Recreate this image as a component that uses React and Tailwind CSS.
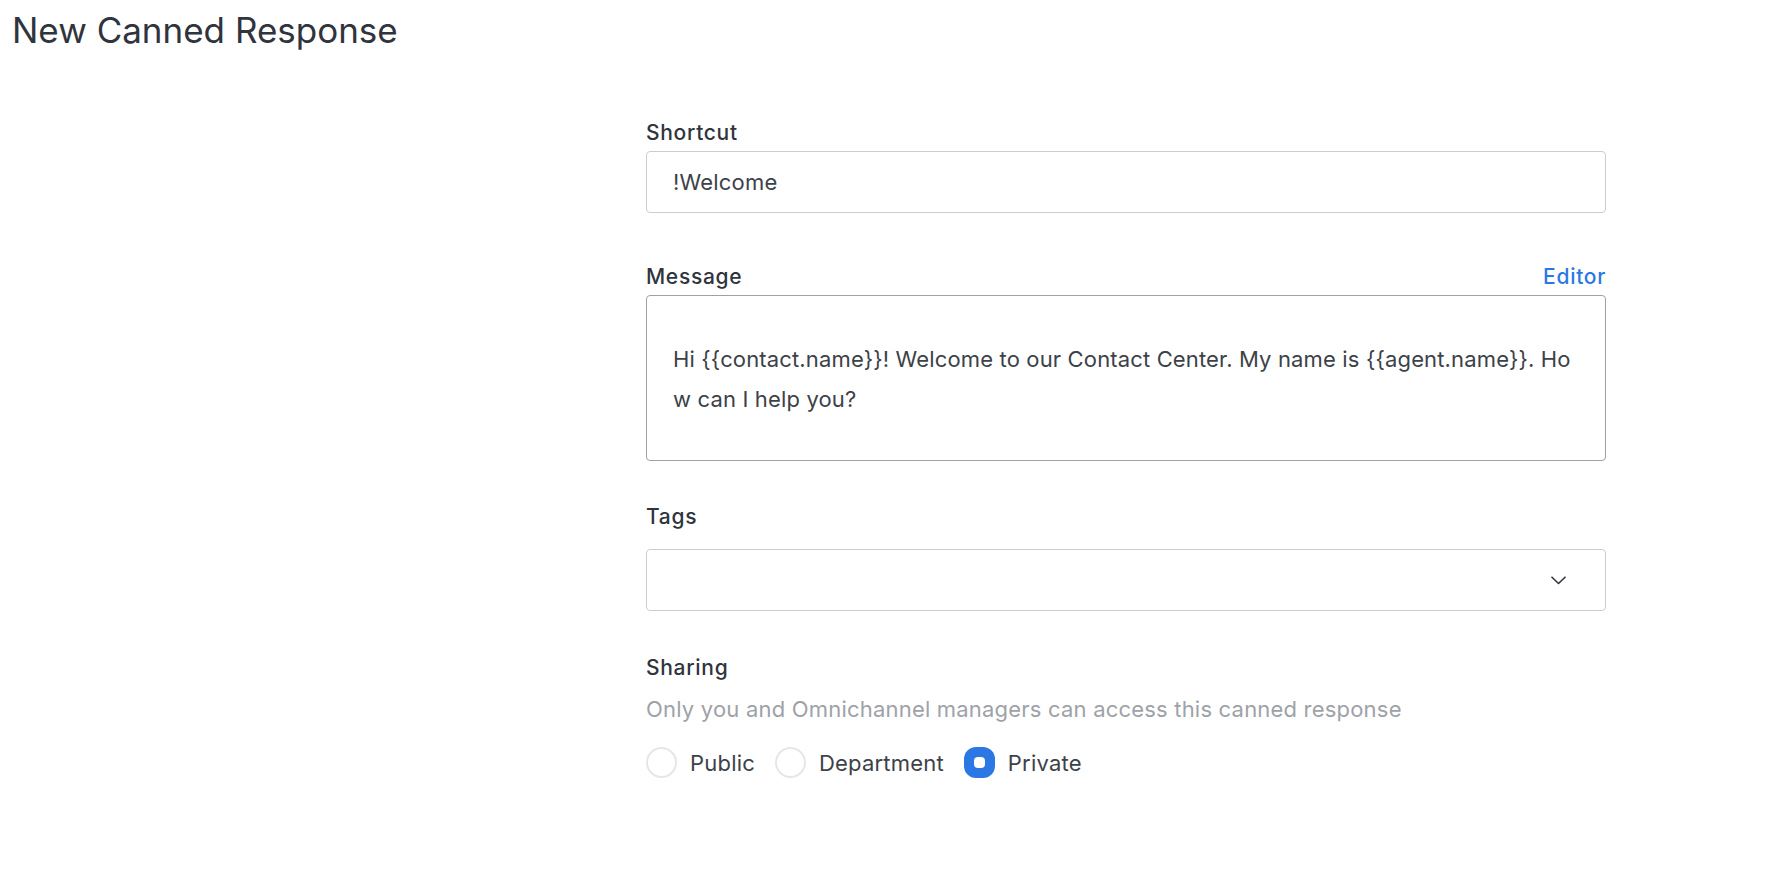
import { useState } from 'react';

function Radio({ label, checked, onChange }) {
  return (
    <label className="flex items-center gap-[13px] cursor-pointer" onClick={onChange}>
      {checked ? (
        <span className="flex h-[31px] w-[31px] items-center justify-center rounded-[12px] bg-[#2b78e4]">
          <span className="h-[11px] w-[11px] rounded-[4px] bg-white" />
        </span>
      ) : (
        <span className="h-[31px] w-[31px] rounded-full border-2 border-[#e4e7ea] bg-white" />
      )}
      <span className="text-[22px] leading-[28px] tracking-[0.2px] text-[#3d4148]">{label}</span>
    </label>
  );
}

export default function App() {
  const [sharing, setSharing] = useState('private');

  return (
    <div className="min-h-screen bg-white font-['Inter','Noto_Sans',sans-serif] text-[#2f343d]">
      <h1 className="pl-[12px] pt-[8px] text-[35px] leading-[44px] font-normal text-[#2f343d]">
        New Canned Response
      </h1>

      <div className="ml-[646px] mt-[67px] w-[960px]">
        {/* Shortcut */}
        <div className="text-[21px] leading-[28px] font-medium tracking-[0.7px]">Shortcut</div>
        <div className="mt-[4px] flex h-[62px] items-center rounded-[4px] border border-[#cbced1] pl-[26px] text-[22px] tracking-[0.2px] text-[#3d4148]">
          !Welcome
        </div>

        {/* Message */}
        <div className="mt-[50px] flex items-center justify-between">
          <span className="text-[21px] leading-[28px] font-medium tracking-[0.7px]">Message</span>
          <span className="text-[21px] leading-[28px] font-medium tracking-[0.7px] text-[#2b78e4]">Editor</span>
        </div>
        <div className="mt-[4px] h-[166px] rounded-[4px] border border-[#9ea2a8] pl-[26px] pr-[28px] pt-[43px] text-[22px] leading-[40px] tracking-[0.15px] text-[#3d4148] break-all">
          Hi {'{{contact.name}}'}! Welcome to our Contact Center. My name is {'{{agent.name}}'}. How can I help you?
        </div>

        {/* Tags */}
        <div className="mt-[42px] text-[21px] leading-[28px] font-medium tracking-[0.7px]">Tags</div>
        <div className="mt-[18px] flex h-[62px] items-center justify-end rounded-[4px] border border-[#cbced1] pr-[39px]">
          <svg width="15" height="9" viewBox="0 0 15 9" fill="none">
            <path d="M1 1.2l6.5 6.3 6.5-6.3" stroke="#2f343d" strokeWidth="1.6" strokeLinecap="round" strokeLinejoin="round" />
          </svg>
        </div>

        {/* Sharing */}
        <div className="mt-[43px] text-[21px] leading-[28px] font-medium tracking-[0.7px]">Sharing</div>
        <div className="mt-[13px] text-[22px] leading-[28px] tracking-[0.2px] text-[#9ea2a8]">
          Only you and Omnichannel managers can access this canned response
        </div>
        <div className="mt-[24px] flex items-center gap-[20px]">
          <Radio label="Public" checked={sharing === 'public'} onChange={() => setSharing('public')} />
          <Radio label="Department" checked={sharing === 'department'} onChange={() => setSharing('department')} />
          <Radio label="Private" checked={sharing === 'private'} onChange={() => setSharing('private')} />
        </div>
      </div>
    </div>
  );
}
